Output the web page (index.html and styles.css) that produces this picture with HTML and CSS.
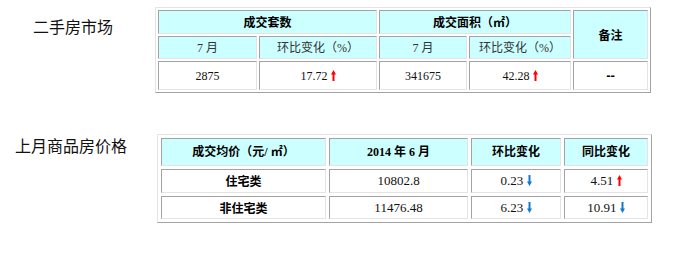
FILE: index.html
```html
<!DOCTYPE html>
<html lang="zh-CN">
<head>
<meta charset="utf-8">
<title>房市数据</title>
<link rel="stylesheet" href="styles.css">
</head>
<body>
<section class="block block-a">
  <h2 class="title title-a">二手房市场</h2>
  <table class="grid grid-a">
    <colgroup>
      <col class="w99"><col class="w118"><col class="w88"><col class="w102"><col class="w75">
    </colgroup>
    <tr class="h24">
      <td class="hd bold" colspan="2">成交套数</td>
      <td class="hd bold" colspan="2">成交面积（㎡）</td>
      <td class="hd bold" rowspan="2">备注</td>
    </tr>
    <tr class="h23">
      <td class="hd">7 月</td>
      <td class="hd">环比变化（%）</td>
      <td class="hd">7 月</td>
      <td class="hd">环比变化（%）</td>
    </tr>
    <tr class="h29">
      <td class="num">2875</td>
      <td class="num">17.72 <svg class="arrow up" viewBox="0 0 5 11"><polygon points="2.5,0 5,4.5 3.5,4.5 3.5,11 1.5,11 1.5,4.5 0,4.5"/></svg></td>
      <td class="num">341675</td>
      <td class="num">42.28 <svg class="arrow up" viewBox="0 0 5 11"><polygon points="2.5,0 5,4.5 3.5,4.5 3.5,11 1.5,11 1.5,4.5 0,4.5"/></svg></td>
      <td class="num dash">--</td>
    </tr>
  </table>
</section>

<section class="block block-b">
  <h2 class="title title-b">上月商品房价格</h2>
  <table class="grid grid-b">
    <colgroup>
      <col class="w165"><col class="w139"><col class="w90"><col class="w84">
    </colgroup>
    <tr class="h28">
      <td class="hd bold">成交均价（元/ ㎡）</td>
      <td class="hd bold">2014 年 6 月</td>
      <td class="hd bold">环比变化</td>
      <td class="hd bold">同比变化</td>
    </tr>
    <tr class="h24">
      <td class="bold">住宅类</td>
      <td class="num">10802.8</td>
      <td class="num">0.23 <svg class="arrow down" viewBox="0 0 5 11"><polygon points="2.5,11 5,6.5 3.5,6.5 3.5,0 1.5,0 1.5,6.5 0,6.5"/></svg></td>
      <td class="num">4.51 <svg class="arrow up" viewBox="0 0 5 11"><polygon points="2.5,0 5,4.5 3.5,4.5 3.5,11 1.5,11 1.5,4.5 0,4.5"/></svg></td>
    </tr>
    <tr class="h23">
      <td class="bold">非住宅类</td>
      <td class="num">11476.48</td>
      <td class="num">6.23 <svg class="arrow down" viewBox="0 0 5 11"><polygon points="2.5,11 5,6.5 3.5,6.5 3.5,0 1.5,0 1.5,6.5 0,6.5"/></svg></td>
      <td class="num">10.91 <svg class="arrow down" viewBox="0 0 5 11"><polygon points="2.5,11 5,6.5 3.5,6.5 3.5,0 1.5,0 1.5,6.5 0,6.5"/></svg></td>
    </tr>
  </table>
</section>
</body>
</html>
```

FILE: styles.css
```css
html, body {
  margin: 0;
  padding: 0;
  background: #ffffff;
}

body {
  font-family: "Liberation Serif", "Noto Sans CJK SC", serif;
  color: #000;
}

.block {
  display: flex;
  align-items: flex-start;
}

.block-a {
  padding-top: 7px;
}

.block-b {
  margin-top: 41px;
}

.title {
  margin: 0;
  font-family: "Noto Sans CJK SC", sans-serif;
  font-weight: normal;
  font-size: 16px;
  line-height: 20px;
  color: #111;
  white-space: nowrap;
}

.title-a {
  width: 122px;
  padding-left: 33px;
  margin-top: 9px;
}

.title-b {
  width: 142px;
  padding-left: 15px;
  margin-top: 1px;
}

.grid {
  border-collapse: separate;
  table-layout: fixed;
  border-style: solid;
  border-width: 1px;
  border-color: #e4e4e4 #a3a3a3 #a3a3a3 #e4e4e4;
}

.grid-a {
  width: 496px;
  border-spacing: 2px;
}

.grid-b {
  width: 495px;
  border-spacing: 3px;
}

.grid td {
  box-sizing: border-box;
  padding: 0;
  border-style: solid;
  border-width: 1px;
  border-color: #a3a3a3 #e4e4e4 #e4e4e4 #a3a3a3;
  text-align: center;
  vertical-align: middle;
  font-size: 12px;
  line-height: 14px;
  white-space: nowrap;
}

.hd {
  background: #ccffff;
  color: #333;
}

.bold {
  font-family: "Noto Sans CJK SC", sans-serif;
  font-weight: bold;
  color: #000;
}

.grid-b .hd.bold {
  font-family: "Liberation Serif", "Noto Sans CJK SC", serif;
}

.num {
  font-size: 12px;
  color: #111;
}

.grid-b .num {
  font-size: 13px;
}

.grid td.dash {
  font-family: "Liberation Sans", sans-serif;
  font-weight: bold;
  font-size: 13px;
  color: #000;
}

.w99 { width: 99px; }
.w118 { width: 118px; }
.w88 { width: 88px; }
.w102 { width: 102px; }
.w75 { width: 75px; }
.w165 { width: 165px; }
.w139 { width: 139px; }
.w90 { width: 90px; }
.w84 { width: 84px; }

.h23 { height: 23px; }
.h24 { height: 24px; }
.h28 { height: 28px; }
.h29 { height: 29px; }

.arrow {
  width: 5px;
  height: 11px;
  vertical-align: -1px;
}

.arrow.up polygon { fill: #ff0000; }
.arrow.down polygon { fill: #1479cc; }
```
